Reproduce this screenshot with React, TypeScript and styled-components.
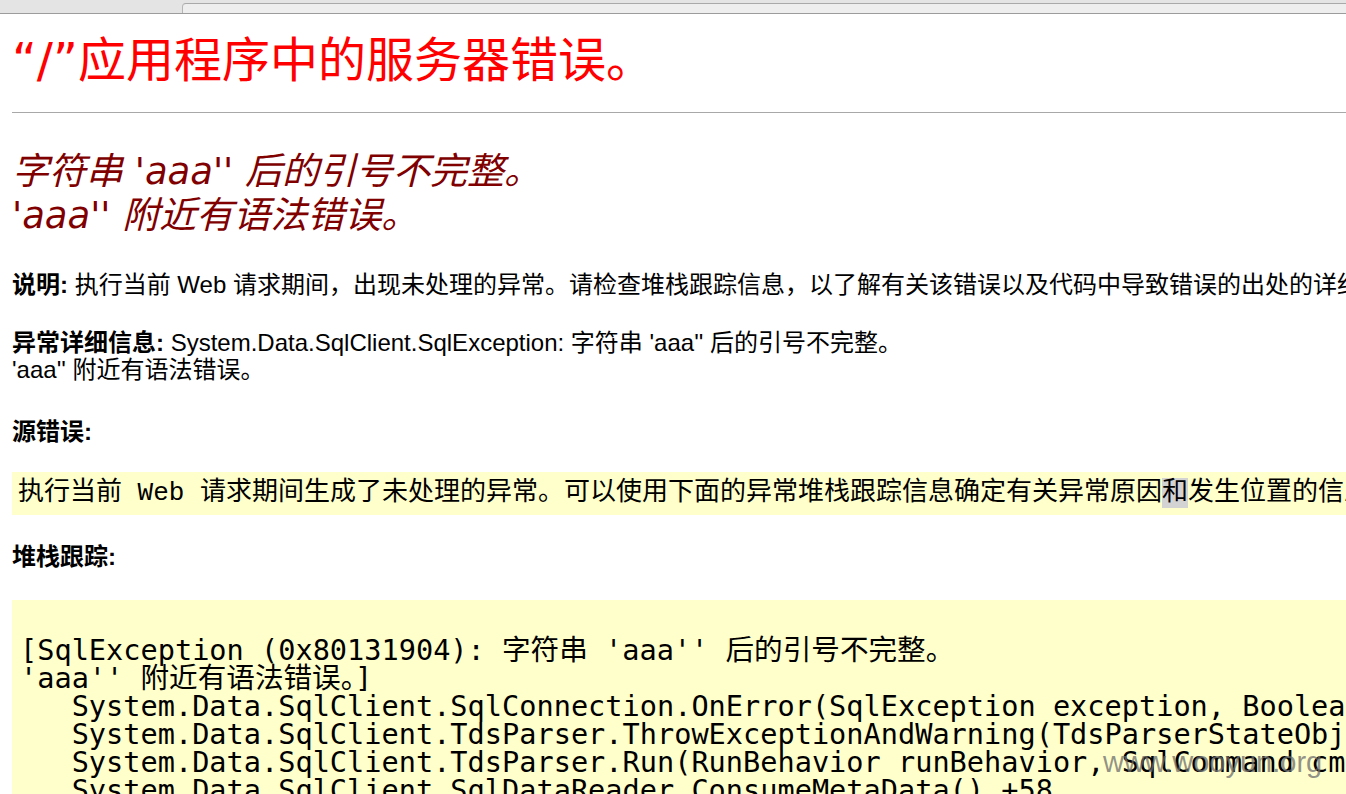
import React from "react";
import styled, { createGlobalStyle } from "styled-components";

const GlobalStyle = createGlobalStyle`
  html, body {
    margin: 0;
    padding: 0;
    background: #ffffff;
    overflow: hidden;
  }
  body {
    font-family: "Liberation Sans", "Noto Sans CJK SC", sans-serif;
    color: #000;
  }
`;

const ChromeBar = styled.div`
  display: flex;
  height: 13px;
  background: #e4e4e4;
  border-bottom: 1px solid #9c9c9c;
`;

const ChromeSpacer = styled.div`
  width: 182px;
  flex: none;
`;

const ChromeTab = styled.div`
  flex: 1;
  margin-top: 3px;
  background: #eeeeee;
  border-top: 1px solid #a9a9a9;
  border-left: 1px solid #b5b5b5;
  border-top-left-radius: 4px;
`;

const Page = styled.div`
  width: 1700px;
  padding-left: 12px;
`;

const Title = styled.h1`
  margin: 18px 0 0;
  font-family: "DejaVu Sans", "Noto Sans CJK SC", sans-serif;
  font-weight: normal;
  font-size: 48px;
  line-height: 56px;
  color: #f00;
  white-space: nowrap;
`;

const Rule = styled.div`
  margin-top: 24px;
  height: 1px;
  background: #a8a8a8;
`;

const Subtitle = styled.h2`
  margin: 37px 0 0;
  font-family: "DejaVu Sans", "Noto Sans CJK SC", sans-serif;
  font-weight: normal;
  font-style: italic;
  font-size: 37px;
  line-height: 44px;
  color: #800000;
  white-space: nowrap;
`;

const Para = styled.div<{ $gap: number }>`
  margin-top: ${(p) => p.$gap}px;
  font-size: 24px;
  line-height: 27px;
  white-space: nowrap;
`;

const Label = styled.b`
  font-weight: bold;
`;

const CodeBox = styled.div<{ $gap: number; $tall?: boolean }>`
  position: relative;
  margin-top: ${(p) => p.$gap}px;
  background: #ffffcc;
  padding: ${(p) => (p.$tall ? "8px 8px 40px" : "6px 6px")};
`;

const SourceLine = styled.code`
  display: block;
  font-family: "Liberation Mono", "Noto Sans CJK SC", monospace;
  font-size: 26px;
  line-height: 31px;
  white-space: nowrap;
`;

const Mark = styled.span`
  background: #d3d3d3;
`;

const Trace = styled.pre`
  margin: 0;
  font-family: "DejaVu Sans Mono", "Noto Sans CJK SC", monospace;
  font-size: 28.6px;
  line-height: 28px;
  white-space: pre;
`;

const Watermark = styled.span`
  position: absolute;
  left: 1091px;
  top: 147px;
  font-family: "Liberation Sans", sans-serif;
  font-size: 29px;
  line-height: 30px;
  color: rgba(110, 110, 110, 0.75);
  pointer-events: none;
  white-space: nowrap;
`;

const trace = `
[SqlException (0x80131904): 字符串 'aaa'' 后的引号不完整。
'aaa'' 附近有语法错误。]
   System.Data.SqlClient.SqlConnection.OnError(SqlException exception, Boolean breakConnection, Action\`1 wrapCloseInAction) +1767866
   System.Data.SqlClient.TdsParser.ThrowExceptionAndWarning(TdsParserStateObject stateObj, Boolean callerHasConnectionLock, Boolean asyncClose) +5352418
   System.Data.SqlClient.TdsParser.Run(RunBehavior runBehavior, SqlCommand cmdHandler, SqlDataReader dataStream, BulkCopySimpleResultSet bulkCopyHandler, TdsParserStateObject stateObj) +244
   System.Data.SqlClient.SqlDataReader.ConsumeMetaData() +58
   System.Data.SqlClient.SqlDataReader.get_MetaData() +89
`;

export default function App() {
  return (
    <>
      <GlobalStyle />
      <ChromeBar>
        <ChromeSpacer />
        <ChromeTab />
      </ChromeBar>
      <Page>
        <Title>“/”应用程序中的服务器错误。</Title>
        <Rule />
        <Subtitle>
          字符串 'aaa'' 后的引号不完整。
          <br />
          'aaa'' 附近有语法错误。
        </Subtitle>
        <Para $gap={33}>
          <Label>说明:</Label> 执行当前 Web 请求期间，出现未处理的异常。请检查堆栈跟踪信息，以了解有关该错误以及代码中导致错误的出处的详细信息。
        </Para>
        <Para $gap={31}>
          <Label>异常详细信息:</Label> System.Data.SqlClient.SqlException: 字符串 'aaa'' 后的引号不完整。
          <br />
          'aaa'' 附近有语法错误。
        </Para>
        <Para $gap={35}>
          <Label>源错误:</Label>
        </Para>
        <CodeBox $gap={27}>
          <SourceLine>
            执行当前 Web 请求期间生成了未处理的异常。可以使用下面的异常堆栈跟踪信息确定有关异常原因<Mark>和</Mark>发生位置的信息。
          </SourceLine>
        </CodeBox>
        <Para $gap={28}>
          <Label>堆栈跟踪:</Label>
        </Para>
        <CodeBox $gap={30} $tall>
          <Trace>{trace}</Trace>
          <Watermark>www.wooyun.org</Watermark>
        </CodeBox>
      </Page>
    </>
  );
}
